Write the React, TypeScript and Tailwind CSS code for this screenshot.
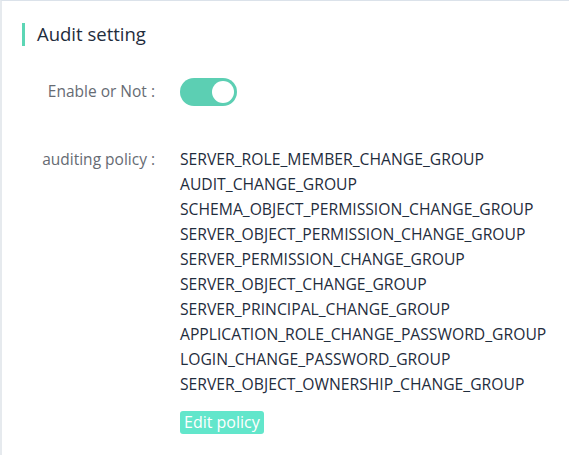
const policies = [
  "SERVER_ROLE_MEMBER_CHANGE_GROUP",
  "AUDIT_CHANGE_GROUP",
  "SCHEMA_OBJECT_PERMISSION_CHANGE_GROUP",
  "SERVER_OBJECT_PERMISSION_CHANGE_GROUP",
  "SERVER_PERMISSION_CHANGE_GROUP",
  "SERVER_OBJECT_CHANGE_GROUP",
  "SERVER_PRINCIPAL_CHANGE_GROUP",
  "APPLICATION_ROLE_CHANGE_PASSWORD_GROUP",
  "LOGIN_CHANGE_PASSWORD_GROUP",
  "SERVER_OBJECT_OWNERSHIP_CHANGE_GROUP",
];

export default function App() {
  return (
    <div className="h-[455px] w-[569px] overflow-hidden border-l-2 border-t border-l-[#e6eaee] border-t-[#dbe2ea] bg-white font-['Open_Sans',sans-serif]">
      <div className="flex items-center pl-5 pt-[21px]">
        <span className="h-[23px] w-[3px] bg-[#5cd6b5]" />
        <h2 className="ml-3 text-[18.5px] leading-[24px] text-[#1f2d3d]">Audit setting</h2>
      </div>

      <div className="mt-[32px] flex items-center">
        <div className="w-[153px] text-right text-[15.5px] text-[#666b73]">Enable or Not :</div>
        <div className="ml-[25px] flex h-[28px] w-[57px] items-center justify-end rounded-full bg-[#5ccfb3] pr-[3px]">
          <span className="h-[22px] w-[22px] rounded-full bg-white" />
        </div>
      </div>

      <div className="mt-[41px] flex items-start">
        <div className="w-[153px] text-right text-[15.5px] leading-[25px] text-[#666b73]">auditing policy :</div>
        <div className="ml-[25px]">
          {policies.map((p) => (
            <div key={p} className="text-[15.7px] leading-[25px] text-[#1f2d3d]">
              {p}
            </div>
          ))}
          <button className="mt-[14px] h-[23px] rounded-[3px] bg-[#62e6cb] px-[4px] text-[16px] leading-[23px] text-white">
            Edit policy
          </button>
        </div>
      </div>
    </div>
  );
}
